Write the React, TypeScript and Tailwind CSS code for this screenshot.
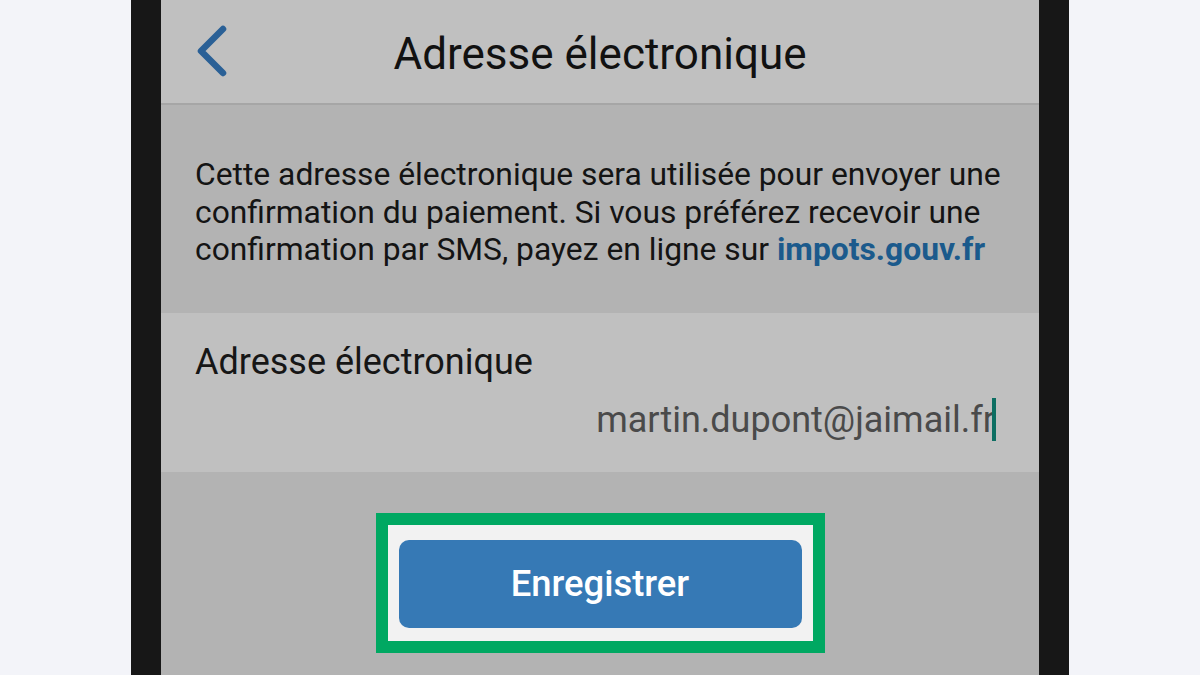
import React from "react";

const font = { fontFamily: "Roboto, 'Noto Sans', sans-serif" };

const BackIcon = () => (
  <svg width="36" height="54" viewBox="0 0 36 54" fill="none">
    <path d="M28 4 L6 26 L28 48" stroke="#2a6096" strokeWidth="6.5" strokeLinecap="round" strokeLinejoin="round" />
  </svg>
);

export default function App() {
  return (
    <div className="w-[1200px] h-[675px] bg-[#f3f4f9] flex justify-center overflow-hidden" style={font}>
      <div className="w-[938px] h-full bg-[#171717] px-[30px]">
        <div className="h-full bg-[#b3b3b3] flex flex-col">
          {/* header */}
          <div className="h-[105px] shrink-0 bg-[#c0c0c0] border-b-2 border-[#a6a6a6] relative flex items-center justify-center">
            <div className="absolute left-[34px] top-[25px]">
              <BackIcon />
            </div>
            <h1 className="text-[44px] leading-none text-[#111] mt-[4px]">Adresse électronique</h1>
          </div>

          {/* info text */}
          <div className="h-[208px] shrink-0 pl-[34px] pt-[51px] text-[31.8px] leading-[37.5px] text-[#141414]">
            <p>
              Cette adresse électronique sera utilisée pour envoyer une
              <br />
              confirmation du paiement. Si vous préférez recevoir une
              <br />
              confirmation par SMS, payez en ligne sur{" "}
              <span className="font-bold text-[#1b5a8c]">impots.gouv.fr</span>
            </p>
          </div>

          {/* input */}
          <div className="h-[159px] shrink-0 bg-[#c0c0c0] px-[34px] pt-[29px]">
            <div className="text-[36px] leading-[40px] text-[#161616]">Adresse électronique</div>
            <div className="flex justify-end items-center mt-[16px] pr-[9px]">
              <span className="text-[36px] leading-[40px] text-[#4a4a4a]">martin.dupont@jaimail.fr</span>
              <span className="w-[4px] h-[43px] bg-[#0d6e62] -ml-[3px]" />
            </div>
          </div>

          {/* action */}
          <div className="pt-[41px] flex justify-center">
            <div className="border-[12px] border-[#00a862] bg-[#f2f2f2] px-[11px] pt-[15px] pb-[13px]">
              <button className="w-[403px] h-[88px] rounded-[10px] bg-[#3679b5] text-white text-[36.4px] font-medium">
                Enregistrer
              </button>
            </div>
          </div>
        </div>
      </div>
    </div>
  );
}
